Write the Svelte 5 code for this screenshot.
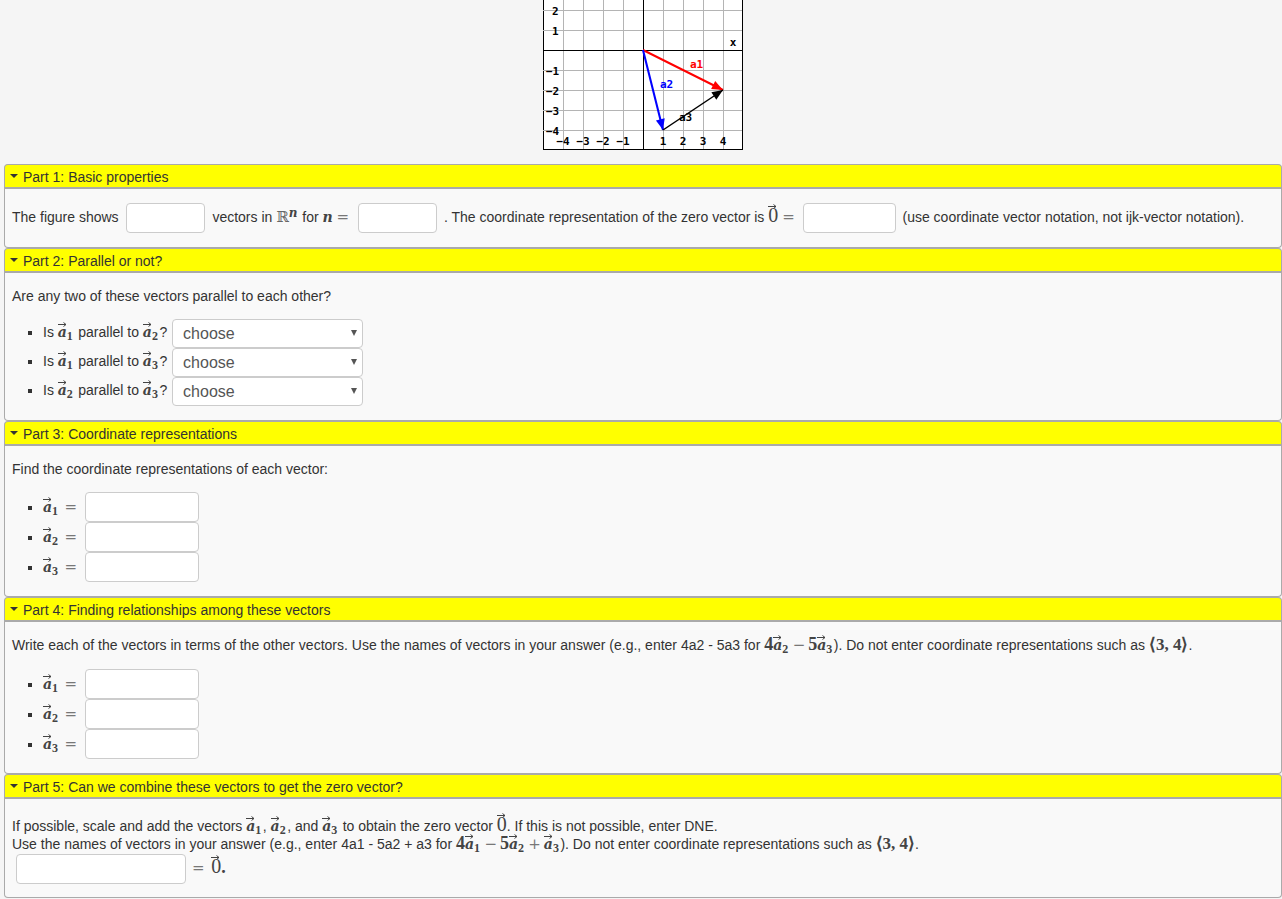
<script>
  const gridX = [20, 40, 60, 80, 120, 140, 160, 180];
  const gridY = [10, 30, 70, 90, 110, 130];
  const yLabels = [["2", 9, 11], ["1", 9, 31], ["−1", 3, 71], ["−2", 3, 91], ["−3", 3, 111], ["−4", 3, 131]];
  const xLabels = [["−4", 20], ["−3", 40], ["−2", 60], ["−1", 80], ["1", 120], ["2", 140], ["3", 160], ["4", 180]];
  const arrows = [
    { from: [100, 50], to: [180, 90], color: "#ff0000", width: 2 },
    { from: [100, 50], to: [120, 130], color: "#0000ff", width: 2 },
    { from: [120, 130], to: [180, 90], color: "#000000", width: 1.5 }
  ];

  function head(a) {
    const dx = a.to[0] - a.from[0];
    const dy = a.to[1] - a.from[1];
    const len = Math.hypot(dx, dy);
    const ux = dx / len;
    const uy = dy / len;
    const bx = a.to[0] - ux * 11;
    const by = a.to[1] - uy * 11;
    return `${a.to[0]},${a.to[1]} ${bx - uy * 4.5},${by + ux * 4.5} ${bx + uy * 4.5},${by - ux * 4.5}`;
  }

  const pairs = [["1", "2"], ["1", "3"], ["2", "3"]];
  const names = ["1", "2", "3"];
</script>

{#snippet vec(sub)}
  <span class="math"><span class="arrowed">a<svg class="over" viewBox="0 0 9 5" aria-hidden="true"><path d="M0 2.5H8M5.5 .5L8 2.5L5.5 4.500" fill="none" stroke="#444" stroke-width="1"/></svg></span><sub>{sub}</sub></span>
{/snippet}

{#snippet zero()}
  <span class="zero"><span class="arrowed">0<svg class="over" viewBox="0 0 9 5" aria-hidden="true"><path d="M0 2.5H8M5.5 .5L8 2.5L5.5 4.500" fill="none" stroke="#444" stroke-width="1"/></svg></span></span>
{/snippet}

{#snippet header(title)}
  <div class="head"><span class="caret"></span>{title}</div>
{/snippet}

<div class="page">
  <div class="figure">
    <svg width="200" height="150" viewBox="0 0 200 150">
      <rect x="0.5" y="-10" width="199" height="159.500" fill="#fff" stroke="#000"/>
      <g stroke="#b4b4b4" shape-rendering="crispEdges">
        {#each gridX as x}
          <line x1={x + 0.5} y1="0" x2={x + 0.5} y2="149"/>
        {/each}
        {#each gridY as y}
          <line x1="0" y1={y + 0.5} x2="199" y2={y + 0.5}/>
        {/each}
      </g>
      <g stroke="#000" shape-rendering="crispEdges">
        <line x1="100.500" y1="0" x2="100.500" y2="149"/>
        <line x1="0" y1="50.500" x2="199" y2="50.500"/>
      </g>
      <g class="tick">
        {#each yLabels as [t, x, y]}
          <text {x} y={y + 4}>{t}</text>
        {/each}
        {#each xLabels as [t, x]}
          <text {x} y="145" text-anchor="middle">{t}</text>
        {/each}
        <text x="190" y="46" text-anchor="middle">x</text>
      </g>
      {#each arrows as a}
        <line x1={a.from[0]} y1={a.from[1]} x2={a.to[0]} y2={a.to[1]} stroke={a.color} stroke-width={a.width}/>
        <polygon points={head(a)} fill={a.color}/>
      {/each}
      <g class="tick">
        <text x="153.500" y="68" text-anchor="middle" fill="#ff0000">a1</text>
        <text x="123.500" y="88" text-anchor="middle" fill="#0000ff">a2</text>
        <text x="142.500" y="121" text-anchor="middle">a3</text>
      </g>
    </svg>
  </div>

  <section class="part">
    {@render header("Part 1: Basic properties")}
    <div class="body one">
      The figure shows <input class="small first" type="text"/> vectors in <span class="bb">ℝ<sup>n</sup></span> for <span class="math">n</span> <span class="eq">=</span> <input class="small" type="text"/> . The coordinate representation of the zero vector is {@render zero()} <span class="eq">=</span> <input class="wide" type="text"/> (use coordinate vector notation, not ijk-vector notation).
    </div>
  </section>

  <section class="part">
    {@render header("Part 2: Parallel or not?")}
    <div class="body">
      <p>Are any two of these vectors parallel to each other?</p>
      <ul class="choose">
        {#each pairs as [a, b]}
          <li>
            Is {@render vec(a)} parallel to {@render vec(b)}?
            <span class="select-wrap"><select><option>choose</option></select></span>
          </li>
        {/each}
      </ul>
    </div>
  </section>

  <section class="part">
    {@render header("Part 3: Coordinate representations")}
    <div class="body">
      <p>Find the coordinate representations of each vector:</p>
      <ul class="answers">
        {#each names as n}
          <li>{@render vec(n)} <span class="eq">=</span> <input class="mid" type="text"/></li>
        {/each}
      </ul>
    </div>
  </section>

  <section class="part">
    {@render header("Part 4: Finding relationships among these vectors")}
    <div class="body">
      <p class="taller">Write each of the vectors in terms of the other vectors. Use the names of vectors in your answer (e.g., enter 4a2 - 5a3 for <span class="num">4</span>{@render vec("2")} <span class="eq op">−</span> <span class="num">5</span>{@render vec("3")}). Do not enter coordinate representations such as <span class="num angle">⟨3, 4⟩</span>.</p>
      <ul class="answers">
        {#each names as n}
          <li>{@render vec(n)} <span class="eq">=</span> <input class="mid" type="text"/></li>
        {/each}
      </ul>
    </div>
  </section>

  <section class="part">
    {@render header("Part 5: Can we combine these vectors to get the zero vector?")}
    <div class="body five">
      <p class="tight">If possible, scale and add the vectors {@render vec("1")}, {@render vec("2")}, and {@render vec("3")} to obtain the zero vector {@render zero()}. If this is not possible, enter DNE.</p>
      <p class="tight">Use the names of vectors in your answer (e.g., enter 4a1 - 5a2 + a3 for <span class="num">4</span>{@render vec("1")} <span class="eq op">−</span> <span class="num">5</span>{@render vec("2")} <span class="eq op">+</span> {@render vec("3")}). Do not enter coordinate representations such as <span class="num angle">⟨3, 4⟩</span>.</p>
      <div class="last"><input class="long" type="text"/> <span class="eq">=</span> {@render zero()}<span class="num">.</span></div>
    </div>
  </section>
</div>

<style>
  :global(body) {
    background: #f5f5f5;
  }
  .page {
    font-family: "Liberation Sans", Arial, sans-serif;
    font-size: 14px;
    line-height: 18px;
    color: #333;
    padding-left: 4px;
    height: 899px;
    overflow: hidden;
    box-sizing: border-box;
  }
  .figure {
    display: flex;
    justify-content: center;
    height: 150px;
    margin-bottom: 14px;
  }
  .figure svg {
    display: block;
  }
  .tick text {
    font-family: "DejaVu Sans Mono", monospace;
    font-weight: 700;
    font-size: 11px;
  }
  .head {
    display: flex;
    align-items: center;
    height: 21px;
    padding-top: 1px;
    background: #ffff00;
    border: 1px solid #aaa;
    border-bottom-width: 2px;
    border-radius: 4px 4px 0 0;
    color: #333;
  }
  .caret {
    width: 0;
    height: 0;
    border-left: 4px solid transparent;
    border-right: 4px solid transparent;
    border-top: 4px solid #333;
    margin: -1px 5px 0 5px;
  }
  .body {
    background: #f9f9f9;
    border: 1px solid #aaa;
    border-top: 0;
    border-radius: 0 0 4px 4px;
    padding: 14px 7px;
  }
  .body.one {
    height: 30px;
    white-space: nowrap;
  }
  .body.five {
    padding: 18px 7px 13px;
  }
  p {
    margin: 0 0 14px;
    height: 18px;
    white-space: nowrap;
  }
  p.taller {
    height: 19px;
  }
  p.tight {
    margin: 0;
  }
  ul {
    margin: 0;
    padding-left: 31px;
    list-style-type: square;
  }
  input {
    box-sizing: border-box;
    height: 30px;
    border: 1px solid #ccc;
    border-radius: 4px;
    background: #fff;
    vertical-align: middle;
    padding: 0;
    margin: 0 3px 0 4px;
  }
  input.small {
    width: 79px;
    margin-left: 5px;
  }
  input.first {
    margin: 0 4px 0 3px;
  }
  input.wide {
    width: 93px;
  }
  input.mid {
    width: 114px;
  }
  input.long {
    width: 170px;
  }
  .last {
    height: 30px;
    margin-top: 1px;
    padding-left: 4px;
    white-space: nowrap;
  }
  .last input {
    margin: 0 2px 0 0;
  }
  .last .eq {
    margin-right: 3px;
  }
  .answers li {
    height: 30px;
    line-height: 30px;
  }
  .answers .eq {
    margin-left: 1px;
  }
  .answers input {
    margin: 0 0 0 4.5px;
    vertical-align: top;
  }
  .choose li {
    height: 29px;
    line-height: 27px;
  }
  .select-wrap {
    position: relative;
    display: inline-block;
    vertical-align: top;
    margin-left: 1px;
  }
  .select-wrap::after {
    content: "";
    position: absolute;
    right: 6px;
    top: 11px;
    border-left: 3px solid transparent;
    border-right: 3px solid transparent;
    border-top: 6px solid #555;
    pointer-events: none;
  }
  select {
    display: block;
    box-sizing: border-box;
    width: 191px;
    height: 29px;
    appearance: none;
    border: 1px solid #ccc;
    border-radius: 4px;
    background: #fff;
    color: #555;
    font-family: "Liberation Sans", Arial, sans-serif;
    font-size: 16px;
    padding: 0 0 0 10px;
  }
  .math {
    font-family: "DejaVu Serif", serif;
    font-weight: 700;
    font-style: italic;
    font-size: 14px;
    line-height: 0;
    color: #444;
  }
  .math sub {
    font-family: "Liberation Serif", serif;
    font-style: normal;
    font-weight: 700;
    font-size: 12px;
    line-height: 0;
    vertical-align: -3px;
    margin-right: 1.5px;
  }
  .num {
    font-family: "Liberation Serif", serif;
    font-weight: 700;
    font-size: 18px;
    line-height: 0;
    color: #444;
  }
  .angle {
    font-size: 17px;
  }
  .zero {
    font-family: "Liberation Serif", serif;
    font-size: 20px;
    line-height: 0;
    color: #444;
  }
  .arrowed {
    position: relative;
    display: inline-block;
    line-height: 14px;
  }
  .zero .arrowed {
    line-height: 13px;
  }
  .over {
    position: absolute;
    left: 0;
    top: -3px;
    width: 9px;
    height: 5px;
  }
  .zero .over {
    top: -5px;
  }
  .bb {
    font-family: "DejaVu Serif", serif;
    color: #666;
    font-size: 15px;
    line-height: 0;
  }
  .bb sup {
    font-family: "DejaVu Serif", serif;
    font-weight: 700;
    font-style: italic;
    font-size: 12px;
    line-height: 0;
    color: #444;
    vertical-align: 5px;
    margin-right: 1px;
  }
  .eq {
    font-family: "DejaVu Serif", serif;
    font-size: 15px;
    color: #777;
    line-height: 0;
  }
  .op {
    margin: 0 -1px;
  }
</style>
